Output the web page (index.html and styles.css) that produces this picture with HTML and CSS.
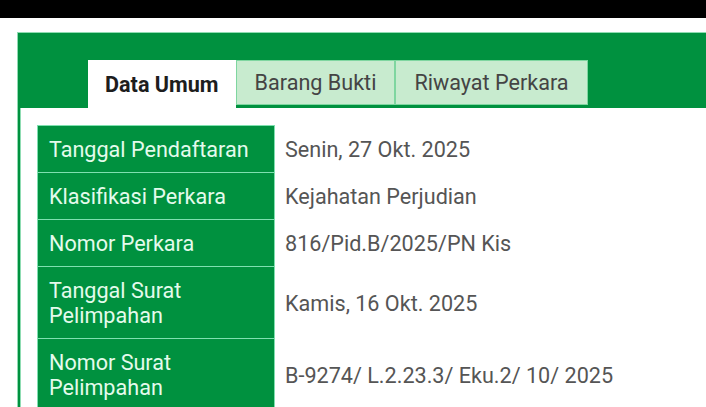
FILE: index.html
```html
<!DOCTYPE html>
<html lang="id">
<head>
<meta charset="utf-8">
<link rel="stylesheet" href="styles.css">
</head>
<body>
<div class="topbar"></div>
<div class="page">
  <div class="panel">
    <div class="tabs">
      <div class="tab active">Data Umum</div>
      <div class="tab">Barang Bukti</div>
      <div class="tab">Riwayat Perkara</div>
    </div>
    <div class="content">
      <table class="info">
        <tr><th>Tanggal Pendaftaran</th><td>Senin, 27 Okt. 2025</td></tr>
        <tr><th>Klasifikasi Perkara</th><td>Kejahatan Perjudian</td></tr>
        <tr><th>Nomor Perkara</th><td>816/Pid.B/2025/PN Kis</td></tr>
        <tr><th>Tanggal Surat<br>Pelimpahan</th><td>Kamis, 16 Okt. 2025</td></tr>
        <tr><th>Nomor Surat<br>Pelimpahan</th><td>B-9274/ L.2.23.3/ Eku.2/ 10/ 2025</td></tr>
      </table>
    </div>
  </div>
</div>
</body>
</html>
```
FILE: styles.css
```css
html, body {
  margin: 0;
  padding: 0;
  background: #fff;
  overflow: hidden;
  width: 706px;
  height: 407px;
}
body {
  font-family: Roboto, "Noto Sans", sans-serif;
}
.topbar {
  height: 18px;
  background: #000;
}
.page {
  padding: 14px 0 0 17px;
}
.panel {
  width: 760px;
  border: 1px solid #8fdcb2;
  background: #00913f;
  padding-left: 2px;
}
.tabs {
  display: flex;
  align-items: flex-end;
  padding: 27px 0 0 68px;
  height: 48px;
}
.tab {
  box-sizing: border-box;
  height: 45px;
  margin-bottom: 3px;
  padding: 0 18px;
  display: flex;
  align-items: center;
  font-size: 21.6px;
  color: #444;
  background: #c8ebcf;
  border: 1px solid #7fd6a0;
}
.tab.active {
  height: 48px;
  margin-bottom: 0;
  background: #fff;
  border: none;
  color: #1d1d1d;
  font-weight: 700;
  padding: 0 17px;
}
.content {
  background: #fff;
  border-left: 1px solid #8fdcb2;
  padding: 17px 16px 20px 16px;
}
.info {
  border-collapse: collapse;
  font-size: 21.6px;
  line-height: 25px;
}
.info th {
  background: #00913f;
  color: #e4fbec;
  font-weight: 400;
  text-align: left;
  width: 214px;
  padding: 11px 11px 10px 11px;
  border: 1px solid #7fe0b0;
  vertical-align: middle;
}
.info td {
  color: #555;
  padding: 11px 10px 10px 10px;
  vertical-align: middle;
}
```
